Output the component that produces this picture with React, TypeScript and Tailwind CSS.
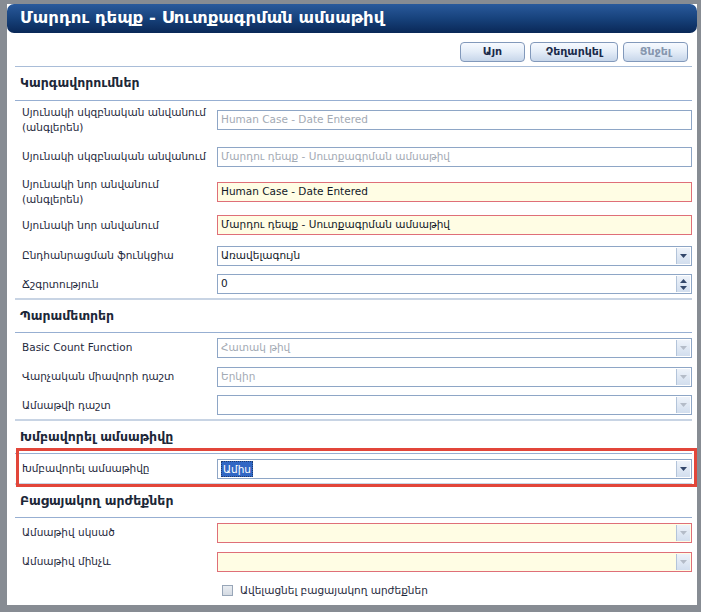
import React from 'react';

type FieldKind = 'text' | 'select' | 'spin';

interface FieldProps {
  kind?: FieldKind;
  value?: string;
  muted?: boolean;
  required?: boolean;
  disabled?: boolean;
  selected?: boolean;
}

const Arrow: React.FC<{ up?: boolean; disabled?: boolean }> = ({ up, disabled }) => (
  <svg width="7" height="4" viewBox="0 0 7 4" className="block">
    <path
      d={up ? 'M0 4 L3.5 0 L7 4 Z' : 'M0 0 L7 0 L3.5 4 Z'}
      fill={disabled ? '#b4bcc8' : '#33476a'}
    />
  </svg>
);

const Field: React.FC<FieldProps> = ({
  kind = 'text',
  value = '',
  muted,
  required,
  disabled,
  selected,
}) => {
  const box = required
    ? 'border-[#df6f78] bg-[#fffde4]'
    : 'border-[#8ea6c6] bg-white';
  return (
    <div className={`flex h-[20px] w-[475px] items-stretch border ${box}`}>
      <div
        className={`flex flex-1 items-center overflow-hidden whitespace-nowrap pl-[3px] ${
          muted ? 'text-[#a3aab4]' : 'text-[#111827]'
        }`}
      >
        {selected ? (
          <span className="border border-dotted border-[#1d3b70] bg-[#3167c4] px-[1px] leading-[14px] text-white">
            {value}
          </span>
        ) : (
          value
        )}
      </div>
      {kind !== 'text' && (
        <div className="m-[1px] flex w-[14px] flex-col items-center justify-center gap-[3px] border-l border-[#b3c4da] bg-gradient-to-b from-[#eef3fa] to-[#d2deee]">
          {kind === 'spin' && <Arrow up disabled={disabled} />}
          <Arrow disabled={disabled} />
        </div>
      )}
    </div>
  );
};

const Row: React.FC<{ label: React.ReactNode; h: string; children: React.ReactNode }> = ({
  label,
  h,
  children,
}) => (
  <div className={`flex items-center ${h}`}>
    <div className="w-[202px] pl-[7px] leading-[15px] text-[#1f2a3d]">{label}</div>
    {children}
  </div>
);

const SectionHeader: React.FC<{ title: string; h: string; top?: boolean }> = ({ title, h, top }) => (
  <div
    className={`flex items-center border-b border-[#97afd2] pl-[5px] text-[12.5px] font-bold text-[#1c2738] ${h} ${
      top ? 'border-t-2 border-t-[#c8d4e4]' : ''
    }`}
  >
    {title}
  </div>
);

const DialogButton: React.FC<{ label: string; w: string; disabled?: boolean }> = ({
  label,
  w,
  disabled,
}) => (
  <button
    className={`h-[20px] ${w} rounded-[4px] border border-[#8299bb] bg-gradient-to-b from-[#f7faff] via-[#e3ecf7] to-[#c7d6ea] text-[11px] font-bold ${
      disabled ? 'text-[#8696ae]' : 'text-[#1a2a4a]'
    }`}
  >
    {label}
  </button>
);

export default function App() {
  return (
    <div className="h-[612px] overflow-hidden bg-[#878c93] pl-[7px] pt-[4px] font-['DejaVu_Sans',sans-serif] text-[10.5px]">
      <div className="flex h-[601px] w-[690px] flex-col bg-white">
        {/* title bar */}
        <div className="flex h-[31px] items-center rounded-[7px] bg-gradient-to-b from-[#2a5a9c] via-[#17427c] to-[#0a2857] pl-[13px] text-[16.5px] font-bold text-white">
          Մարդու դեպք - Սուտքագրման ամսաթիվ
        </div>

        <div className="flex flex-col pl-[8px] pr-[5px]">
          <div className="flex h-[34px] items-start justify-end gap-[5px] border-b border-[#a9bdd8] pr-[4px] pt-[9px]">
            <DialogButton label="Այո" w="w-[65px]" />
            <DialogButton label="Չեղարկել" w="w-[88px]" />
            <DialogButton label="Ցնջել" w="w-[65px]" disabled />
          </div>

          <SectionHeader title="Կարգավորումներ" h="h-[34px]" />
          <Row h="h-[38px]" label={<>Սյունակի սկզբնական անվանում<br />(անգլերեն)</>}>
            <Field value="Human Case - Date Entered" muted />
          </Row>
          <Row h="h-[35px]" label="Սյունակի սկզբնական անվանում">
            <Field value="Մարդու դեպք - Սուտքագրման ամսաթիվ" muted />
          </Row>
          <Row h="h-[35px]" label={<>Սյունակի նոր անվանում<br />(անգլերեն)</>}>
            <Field value="Human Case - Date Entered" required />
          </Row>
          <Row h="h-[32px]" label="Սյունակի նոր անվանում">
            <Field value="Մարդու դեպք - Սուտքագրման ամսաթիվ" required />
          </Row>
          <Row h="h-[29px]" label="Ընդհանրացման ֆունկցիա">
            <Field kind="select" value="Առավելագույն" />
          </Row>
          <Row h="h-[28px]" label="Ճշգրտություն">
            <Field kind="spin" value="0" />
          </Row>

          <SectionHeader title="Պարամետրեր" h="h-[35px]" top />
          <Row h="h-[29px]" label="Basic Count Function">
            <Field kind="select" value="Հատակ թիվ" muted disabled />
          </Row>
          <Row h="h-[29px]" label="Վարչական միավորի դաշտ">
            <Field kind="select" value="Երկիր" muted disabled />
          </Row>
          <Row h="h-[28px]" label="Ամսաթվի դաշտ">
            <Field kind="select" disabled />
          </Row>

          <SectionHeader title="Խմբավորել ամսաթիվը" h="h-[35px]" top />
          <div className="relative border-b-2 border-[#c8d4e4]">
            <Row h="h-[29px]" label="Խմբավորել ամսաթիվը">
              <Field kind="select" value="Ամիս" selected />
            </Row>
            <div className="pointer-events-none absolute -bottom-[4px] -right-[5px] -top-[6px] left-[1px] border-[3px] border-[#e2463a]" />
          </div>

          <SectionHeader title="Բացայակող արժեքներ" h="h-[33px]" />
          <Row h="h-[29px]" label="Ամսաթիվ սկսած">
            <Field kind="select" required disabled />
          </Row>
          <Row h="h-[29px]" label="Ամսաթիվ մինչև">
            <Field kind="select" required disabled />
          </Row>
          <div className="flex h-[29px] items-center pl-[207px] text-[#1f2a3d]">
            <span className="mr-[7px] h-[11px] w-[11px] border border-[#98a6b8] bg-gradient-to-b from-[#e9edf2] to-[#d5dbe3]" />
            Ավելացնել բացայակող արժեքներ
          </div>
        </div>
      </div>
    </div>
  );
}
